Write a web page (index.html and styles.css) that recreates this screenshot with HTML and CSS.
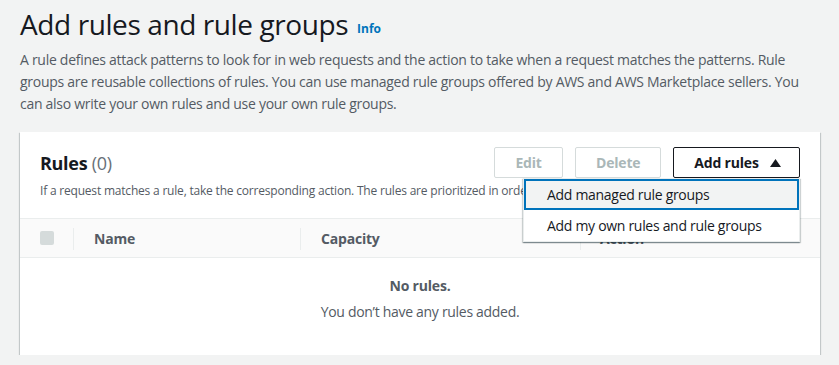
FILE: index.html
```html
<!DOCTYPE html>
<html lang="en">
<head>
<meta charset="utf-8">
<title>Add rules and rule groups</title>
<link rel="stylesheet" href="styles.css">
</head>
<body>
<div class="page">
  <h1 class="title">Add rules and rule groups <a class="info" href="#">Info</a></h1>
  <p class="lead">A rule defines attack patterns to look for in web requests and the action to take when a request matches the patterns. Rule groups are reusable collections of rules. You can use managed rule groups offered by AWS and AWS Marketplace sellers. You can also write your own rules and use your own rule groups.</p>

  <section class="panel">
    <div class="panel-head">
      <div class="head-row">
        <h2 class="panel-title">Rules <span class="count">(0)</span></h2>
        <div class="actions">
          <button class="btn btn-disabled btn-edit">Edit</button>
          <button class="btn btn-disabled btn-delete">Delete</button>
          <div class="dd">
            <button class="btn btn-add">Add rules <svg class="caret" width="11" height="8" viewBox="0 0 11 8"><polygon points="5.5,0 11,8 0,8" fill="#16191f"/></svg></button>
            <ul class="menu">
              <li class="menu-item active">Add managed rule groups</li>
              <li class="menu-item">Add my own rules and rule groups</li>
            </ul>
          </div>
        </div>
      </div>
      <p class="panel-desc">If a request matches a rule, take the corresponding action. The rules are prioritized in order they appear.</p>
    </div>
    <div class="thead">
      <div class="th th-check"><span class="checkbox"></span></div>
      <div class="th th-name"><span class="sep"></span>Name</div>
      <div class="th th-cap"><span class="sep"></span>Capacity</div>
      <div class="th th-act"><span class="sep"></span>Action</div>
    </div>
    <div class="empty">
      <div class="empty-title">No rules.</div>
      <div class="empty-text">You don’t have any rules added.</div>
    </div>
  </section>
</div>
</body>
</html>
```

FILE: styles.css
```css
* { box-sizing: border-box; }
html, body { margin: 0; padding: 0; }
body {
  background: #f2f3f3;
  font-family: "Open Sans", "Noto Sans", Arial, sans-serif;
  color: #16191f;
}
.page {
  padding: 5px 19px 0 20px;
}
.title {
  margin: 0;
  font-size: 28px;
  font-weight: 400;
  line-height: 38px;
  letter-spacing: -0.4px;
  color: #16191f;
}
.info {
  font-size: 12px;
  font-weight: 700;
  color: #0073bb;
  text-decoration: none;
  letter-spacing: 0;
  margin-left: 2px;
  vertical-align: 2px;
}
.lead {
  margin: 1px 0 0 0;
  font-size: 14px;
  line-height: 22px;
  color: #545b64;
  letter-spacing: -0.28px;
}
.panel {
  margin-top: 17px;
  background: #fff;
  box-shadow: 0 1px 1px 0 rgba(0,28,36,.3), 1px 1px 1px 0 rgba(0,28,36,.15), -1px 1px 1px 0 rgba(0,28,36,.15);
  height: 223px;
}
.panel-head {
  padding: 15px 20px 19px 20px;
  border-bottom: 1px solid #eaeded;
}
.head-row {
  display: flex;
  justify-content: space-between;
  align-items: center;
  height: 31px;
}
.panel-title {
  margin: 0;
  font-size: 18px;
  font-weight: 700;
  line-height: 24px;
  letter-spacing: -0.3px;
}
.count {
  font-weight: 400;
  color: #687078;
}
.actions {
  display: flex;
  gap: 12px;
  align-items: center;
}
.btn {
  height: 31px;
  background: #fff;
  border: 1px solid #d5dbdb;
  border-radius: 2px;
  font-family: inherit;
  font-size: 14px;
  font-weight: 700;
  padding: 0 20px;
  letter-spacing: -0.2px;
}
.btn-disabled { color: #aab7b8; }
.btn-edit { width: 69px; }
.btn-delete { width: 86px; }
.btn-add {
  width: 127px;
  border-color: #16191f;
  color: #16191f;
  display: flex;
  align-items: center;
  justify-content: center;
  gap: 11px;
  padding: 0 0 0 2px;
}
.caret { display: block; }
.dd { position: relative; }
.menu {
  position: absolute;
  right: 0;
  top: 31px;
  width: 277px;
  margin: 0;
  padding: 0;
  list-style: none;
  background: #fff;
  border: 1px solid #eaeded;
  box-shadow: 0 1px 1px 0 rgba(0,28,36,.3), 1px 1px 1px 0 rgba(0,28,36,.15), -1px 1px 1px 0 rgba(0,28,36,.15);
  z-index: 5;
}
.menu-item {
  height: 31px;
  line-height: 27px;
  padding: 0 18px 0 21px;
  font-size: 14px;
  color: #16191f;
  letter-spacing: -0.3px;
  border: 2px solid transparent;
}
.menu-item.active {
  background: #f2f3f3;
  border-color: #0073bb;
}
.panel-desc {
  margin: 5px 0 0 0;
  font-size: 12px;
  line-height: 16px;
  color: #545b64;
  letter-spacing: -0.2px;
  white-space: nowrap;
  overflow: hidden;
}
.thead {
  display: flex;
  height: 39px;
  background: #fafafa;
  border-bottom: 1px solid #eaeded;
  align-items: center;
}
.th {
  position: relative;
  font-size: 14px;
  font-weight: 700;
  color: #545b64;
  letter-spacing: -0.2px;
  height: 100%;
  display: flex;
  align-items: center;
}
.th-check { width: 53px; padding-left: 20px; }
.th-name { width: 227px; padding-left: 21px; }
.th-cap { width: 280px; padding-left: 21px; }
.th-act { flex: 1; padding-left: 20px; }
.sep {
  position: absolute;
  left: 0;
  top: 9px;
  width: 1px;
  height: 22px;
  background: #eaeded;
}
.checkbox {
  display: block;
  width: 14px;
  height: 14px;
  background: #d5dbdb;
  border-radius: 2px;
}
.empty {
  text-align: center;
  padding-top: 17px;
}
.empty-title {
  font-size: 14px;
  font-weight: 700;
  color: #545b64;
  line-height: 22px;
  letter-spacing: -0.2px;
}
.empty-text {
  margin-top: 4px;
  font-size: 14px;
  color: #545b64;
  line-height: 22px;
  letter-spacing: -0.3px;
}
```
